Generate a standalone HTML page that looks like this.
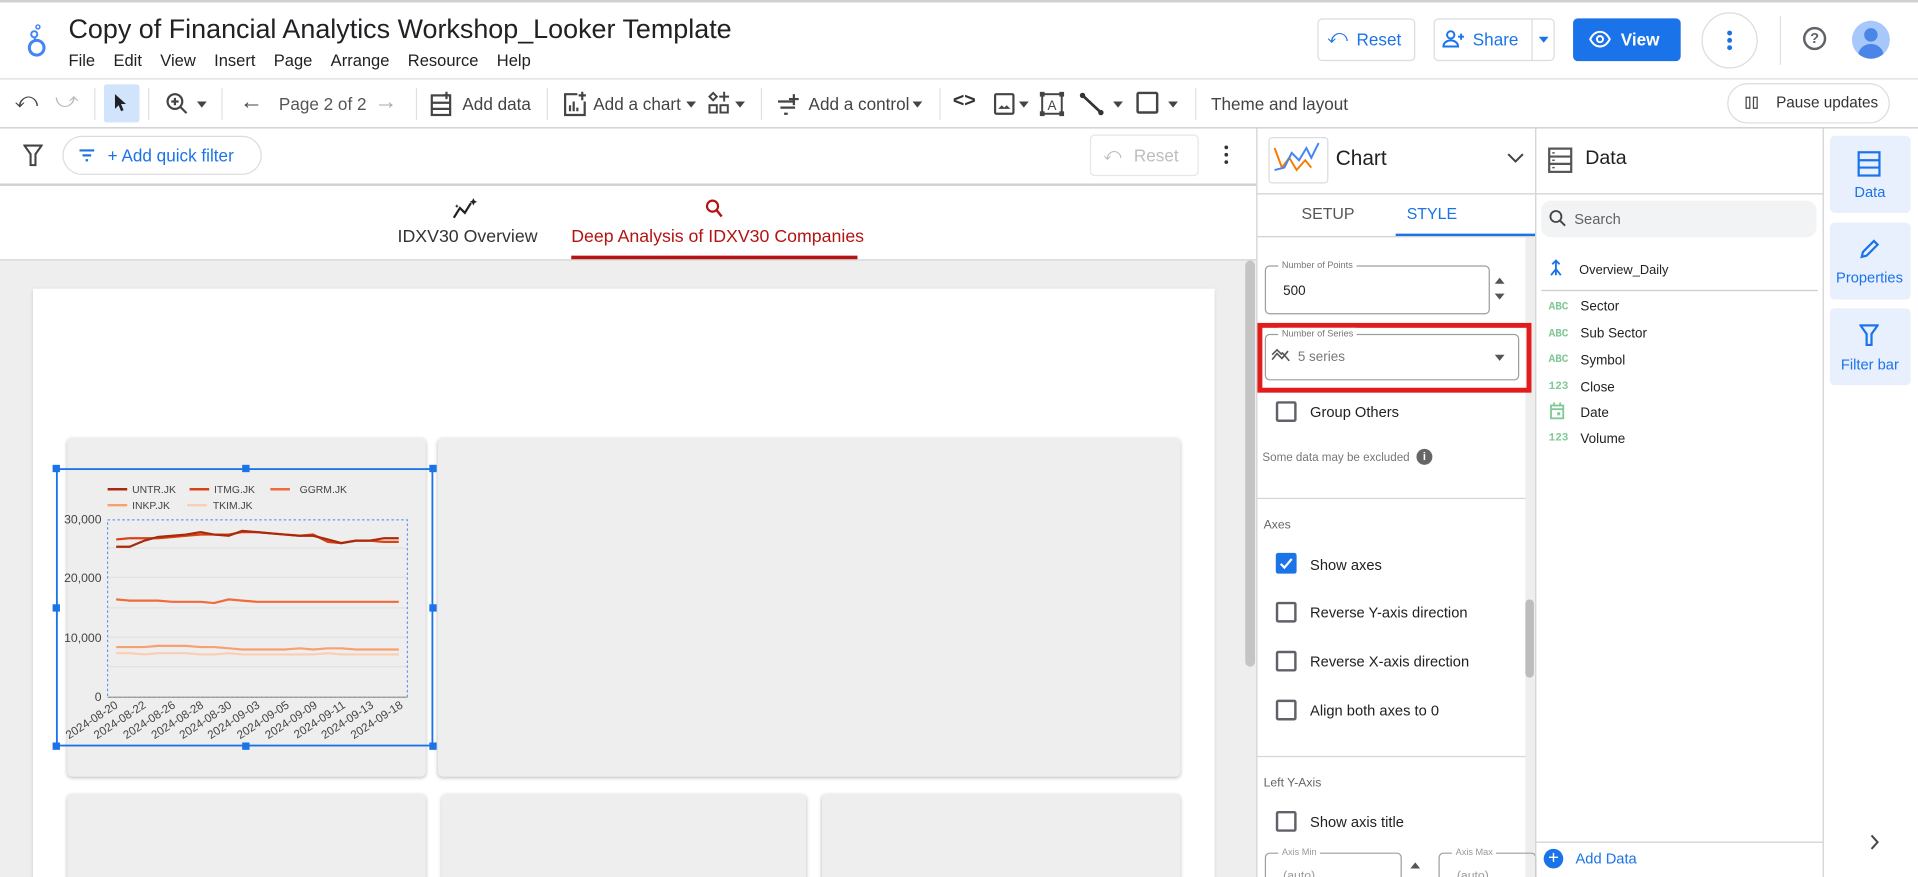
<!DOCTYPE html>
<html><head><meta charset="utf-8"><style>
*{box-sizing:border-box;margin:0;padding:0}
html,body{width:1918px;height:877px;overflow:hidden;background:#fff}
body{font-family:"Liberation Sans",Arial,sans-serif;color:#3c4043}
#w{position:absolute;left:0;top:0;width:1568px;height:717px;transform:scale(1.22321);transform-origin:0 0;overflow:hidden;background:#fff}
.a{position:absolute}
.t{position:absolute;white-space:nowrap}
.btn{position:absolute;border:1px solid #dadce0;border-radius:4px;background:#fff}
.cb{position:absolute;width:17px;height:17px;border:2px solid #5f6368;border-radius:2px}
.lbl{position:absolute;font-size:12px;color:#202124;white-space:nowrap}
.fl{position:absolute;font-size:11px;color:#202124;white-space:nowrap}
.ic{position:absolute;font-size:9px;color:#81c995;font-family:"Liberation Mono",monospace;font-weight:bold}
.card{position:absolute;background:#eeeeee;border-radius:4px;box-shadow:0 1px 3px rgba(0,0,0,.25)}
</style></head><body><div id="w">
<div class="a" style="left:0;top:0;width:1568px;height:2px;background:#d0d0d0"></div>
<svg class="a" style="left:20px;top:18px" width="22" height="30" viewBox="0 0 22 30"><circle cx="10" cy="21" r="6" fill="none" stroke="#4285f4" stroke-width="2.5"/><circle cx="8" cy="10" r="2.5" fill="none" stroke="#4285f4" stroke-width="1.6"/><circle cx="11" cy="4" r="1.6" fill="none" stroke="#4285f4" stroke-width="1.2"/><line x1="8" y1="12" x2="9" y2="15" stroke="#4285f4" stroke-width="1.6"/></svg>
<div class="t" style="left:56px;top:11px;font-size:22px;color:#202124">Copy of Financial Analytics Workshop_Looker Template</div>
<div class="t" style="left:56px;top:42px;font-size:13.5px;color:#202124">File&nbsp;&nbsp;&nbsp;&nbsp;Edit&nbsp;&nbsp;&nbsp;&nbsp;View&nbsp;&nbsp;&nbsp;&nbsp;Insert&nbsp;&nbsp;&nbsp;&nbsp;Page&nbsp;&nbsp;&nbsp;&nbsp;Arrange&nbsp;&nbsp;&nbsp;&nbsp;Resource&nbsp;&nbsp;&nbsp;&nbsp;Help</div>
<div class="btn" style="left:1077px;top:15px;width:80px;height:35px"></div>
<div class="t" style="left:1085px;top:22px;font-size:16px;color:#1a73e8">⤺</div>
<div class="t" style="left:1109px;top:24px;font-size:14px;color:#1a73e8">Reset</div>
<div class="btn" style="left:1172px;top:15px;width:99px;height:35px"></div>
<div class="a" style="left:1252px;top:15px;width:1px;height:35px;background:#dadce0"></div>
<svg class="a" style="left:1179px;top:24px" width="18" height="16" viewBox="0 0 18 16"><circle cx="7" cy="4.5" r="3" fill="none" stroke="#1a73e8" stroke-width="1.6"/><path d="M1 14c0-3 3-5 6-5s6 2 6 5z" fill="none" stroke="#1a73e8" stroke-width="1.6"/><path d="M13 6h5M15.5 3.5v5" stroke="#1a73e8" stroke-width="1.6"/></svg>
<div class="t" style="left:1204px;top:24px;font-size:14px;color:#1a73e8">Share</div>
<div class="a" style="left:1258px;top:30px;border:4px solid transparent;border-top:5px solid #1a73e8"></div>
<div class="a" style="left:1286px;top:15px;width:88px;height:35px;background:#1a73e8;border-radius:4px"></div>
<svg class="a" style="left:1299px;top:25px" width="18" height="14" viewBox="0 0 18 14"><path d="M1 7c2-4 5-6 8-6s6 2 8 6c-2 4-5 6-8 6s-6-2-8-6z" fill="none" stroke="#fff" stroke-width="1.6"/><circle cx="9" cy="7" r="2.5" fill="none" stroke="#fff" stroke-width="1.6"/></svg>
<div class="t" style="left:1325px;top:24px;font-size:14px;color:#fff;font-weight:bold">View</div>
<div class="a" style="left:1391px;top:10px;width:46px;height:46px;border:1px solid #dadce0;border-radius:50%"></div>
<div class="a" style="left:1412px;top:25px;width:4px;height:4px;border-radius:50%;background:#1a73e8;box-shadow:0 6px 0 #1a73e8,0 12px 0 #1a73e8"></div>
<div class="a" style="left:1455px;top:13px;width:1px;height:40px;background:#e0e0e0"></div>
<div class="a" style="left:1474px;top:22px;width:19px;height:19px;border:2px solid #5f6368;border-radius:50%;font-size:12px;font-weight:bold;color:#5f6368;text-align:center;line-height:15px">?</div>
<div class="a" style="left:1514px;top:17px;width:31px;height:31px;border-radius:50%;background:#a8c7fa;overflow:hidden"><div class="a" style="left:10px;top:6px;width:11px;height:11px;border-radius:50%;background:#4a86e8"></div><div class="a" style="left:5px;top:19px;width:21px;height:14px;border-radius:10px 10px 0 0;background:#4a86e8"></div></div>
<div class="a" style="left:0;top:64px;width:1568px;height:1px;background:#dadce0"></div>
<div class="t" style="left:12px;top:72px;font-size:18px;color:#444">⤺</div>
<div class="t" style="left:45px;top:72px;font-size:18px;color:#bbb">⤻</div>
<div class="a" style="left:77px;top:72px;width:1px;height:26px;background:#e0e0e0"></div>
<div class="a" style="left:85px;top:69px;width:29px;height:31px;background:#d2e3fc;border-radius:2px"></div>
<svg class="a" style="left:93px;top:76px" width="12" height="16" viewBox="0 0 12 16"><path d="M1 1l9 8h-4l2 5-2 1-2-5-3 3z" fill="#202124"/></svg>
<div class="a" style="left:121px;top:72px;width:1px;height:26px;background:#e0e0e0"></div>
<svg class="a" style="left:135px;top:75px" width="20" height="20" viewBox="0 0 20 20"><circle cx="8" cy="8" r="6" fill="none" stroke="#444" stroke-width="1.8"/><path d="M12.5 12.5l5 5M5 8h6M8 5v6" stroke="#444" stroke-width="1.8"/></svg>
<div class="a" style="left:161px;top:83px;border:4px solid transparent;border-top:5px solid #444"></div>
<div class="a" style="left:181px;top:72px;width:1px;height:26px;background:#e0e0e0"></div>
<div class="t" style="left:196px;top:73px;font-size:19px;color:#444">←</div>
<div class="t" style="left:228px;top:77px;font-size:14px;color:#555">Page 2 of 2</div>
<div class="t" style="left:306px;top:73px;font-size:19px;color:#aaa">→</div>
<div class="a" style="left:340px;top:72px;width:1px;height:26px;background:#e0e0e0"></div>
<svg class="a" style="left:351px;top:74px" width="22" height="22" viewBox="0 0 22 22"><rect x="2" y="4" width="15" height="16" fill="none" stroke="#444" stroke-width="1.8"/><path d="M2 10h15M2 15h15M14 1v6M11 4h6" stroke="#444" stroke-width="1.8"/></svg>
<div class="t" style="left:378px;top:77px;font-size:14px;color:#444">Add data</div>
<div class="a" style="left:447px;top:72px;width:1px;height:26px;background:#e0e0e0"></div>
<svg class="a" style="left:459px;top:74px" width="22" height="22" viewBox="0 0 22 22"><path d="M13 3H3v17h16V9" fill="none" stroke="#444" stroke-width="1.8"/><path d="M7 17v-5M10 17v-8M13 17v-3M17 1v7M14 4h6" stroke="#444" stroke-width="1.8"/></svg>
<div class="t" style="left:485px;top:77px;font-size:14px;color:#444">Add a chart</div>
<div class="a" style="left:561px;top:83px;border:4px solid transparent;border-top:5px solid #444"></div>
<svg class="a" style="left:578px;top:74px" width="20" height="22" viewBox="0 0 20 22"><path d="M5 2l3 3-3 3-3-3z" fill="none" stroke="#444" stroke-width="1.6"/><rect x="2" y="12" width="6" height="6" fill="none" stroke="#444" stroke-width="1.6"/><rect x="11" y="12" width="6" height="6" fill="none" stroke="#444" stroke-width="1.6"/><path d="M14 1v8M10 5h8" stroke="#444" stroke-width="1.6"/></svg>
<div class="a" style="left:601px;top:83px;border:4px solid transparent;border-top:5px solid #444"></div>
<div class="a" style="left:622px;top:72px;width:1px;height:26px;background:#e0e0e0"></div>
<svg class="a" style="left:634px;top:74px" width="22" height="22" viewBox="0 0 22 22"><path d="M2 9h14M4 14h12M7 19h3M15 3v9M11 7h8" stroke="#444" stroke-width="1.8"/></svg>
<div class="t" style="left:661px;top:77px;font-size:14px;color:#444">Add a control</div>
<div class="a" style="left:746px;top:83px;border:4px solid transparent;border-top:5px solid #444"></div>
<div class="a" style="left:768px;top:72px;width:1px;height:26px;background:#e0e0e0"></div>
<div class="t" style="left:779px;top:74px;font-size:16px;color:#333;font-weight:bold">&lt;&gt;</div>
<svg class="a" style="left:812px;top:75px" width="18" height="20" viewBox="0 0 18 20"><rect x="1.5" y="2" width="15" height="16" rx="1" fill="none" stroke="#444" stroke-width="1.8"/><path d="M4 14l3-3 2 2 2-2 3 3z" fill="#444"/></svg>
<div class="a" style="left:833px;top:83px;border:4px solid transparent;border-top:5px solid #444"></div>
<svg class="a" style="left:850px;top:75px" width="20" height="20" viewBox="0 0 20 20"><rect x="2" y="2" width="16" height="16" fill="none" stroke="#444" stroke-width="1.6"/><rect x="0" y="0" width="4" height="4" fill="#444"/><rect x="16" y="0" width="4" height="4" fill="#444"/><rect x="0" y="16" width="4" height="4" fill="#444"/><rect x="16" y="16" width="4" height="4" fill="#444"/><text x="10" y="15" font-size="11" text-anchor="middle" fill="#444" font-family="Liberation Sans">A</text></svg>
<svg class="a" style="left:882px;top:75px" width="22" height="20" viewBox="0 0 22 20"><path d="M3 3l15 14" stroke="#333" stroke-width="2.2"/><circle cx="3" cy="3" r="2.2" fill="#333"/><circle cx="18" cy="17" r="2.2" fill="#333"/></svg>
<div class="a" style="left:910px;top:83px;border:4px solid transparent;border-top:5px solid #444"></div>
<div class="a" style="left:929px;top:75px;width:18px;height:18px;border:2px solid #444;border-radius:2px"></div>
<div class="a" style="left:955px;top:83px;border:4px solid transparent;border-top:5px solid #444"></div>
<div class="a" style="left:977px;top:72px;width:1px;height:26px;background:#e0e0e0"></div>
<div class="t" style="left:990px;top:77px;font-size:14px;color:#444">Theme and layout</div>
<div class="a" style="left:1412px;top:68px;width:133px;height:33px;border:1px solid #dadce0;border-radius:17px"></div>
<div class="a" style="left:1427px;top:79px;width:4px;height:10px;border:1.5px solid #444"></div>
<div class="a" style="left:1433px;top:79px;width:4px;height:10px;border:1.5px solid #444"></div>
<div class="t" style="left:1452px;top:77px;font-size:12.5px;color:#333">Pause updates</div>
<div class="a" style="left:0;top:104px;width:1568px;height:1px;background:#c8c8c8"></div>
<svg class="a" style="left:19px;top:118px" width="16" height="18" viewBox="0 0 16 18"><path d="M1 1h14l-5 7v9h-4V8z" fill="none" stroke="#444" stroke-width="1.7"/></svg>
<div class="a" style="left:51px;top:111px;width:163px;height:32px;border:1px solid #dadce0;border-radius:16px"></div>
<svg class="a" style="left:64px;top:121px" width="14" height="12" viewBox="0 0 14 12"><path d="M1 2h12M3.5 6h7M6 10h2" stroke="#1a73e8" stroke-width="1.8"/></svg>
<div class="t" style="left:88px;top:119px;font-size:14px;color:#1a73e8">+ Add quick filter</div>
<div class="a" style="left:891px;top:110px;width:89px;height:34px;border:1px solid #e6e6e6;border-radius:4px"></div>
<div class="t" style="left:902px;top:118px;font-size:14px;color:#bdbdbd">⤺</div>
<div class="t" style="left:927px;top:119px;font-size:14px;color:#bdbdbd">Reset</div>
<div class="a" style="left:1001px;top:119px;width:3px;height:3px;border-radius:50%;background:#333;box-shadow:0 6px 0 #333,0 12px 0 #333"></div>
<div class="a" style="left:0;top:150px;width:1027px;height:2px;background:#d0d0d0"></div>
<svg class="a" style="left:369px;top:162px" width="22" height="18" viewBox="0 0 22 18"><path d="M2 16l5-8 4 4 5-8" fill="none" stroke="#222" stroke-width="1.8"/><path d="M17 2l1-2 1 2 2 1-2 1-1 2-1-2-2-1zM4 6l.5-1 .5 1 1 .5-1 .5-.5 1-.5-1-1-.5z" fill="#222"/></svg>
<div class="t" style="left:325px;top:186px;font-size:14.5px;color:#333">IDXV30 Overview</div>
<svg class="a" style="left:576px;top:162px" width="16" height="18" viewBox="0 0 16 18"><circle cx="6.5" cy="6.5" r="4.5" fill="none" stroke="#b31412" stroke-width="1.8"/><path d="M10 10l4 5" stroke="#b31412" stroke-width="2"/></svg>
<div class="t" style="left:467px;top:186px;font-size:14.5px;color:#b31412">Deep Analysis of IDXV30 Companies</div>
<div class="a" style="left:467px;top:209px;width:234px;height:3px;background:#b31412"></div>
<div class="a" style="left:0;top:212px;width:1027px;height:1px;background:#d0d0d0"></div>
<div class="a" style="left:0;top:213px;width:1027px;height:504px;background:#eeeeee"></div>
<div class="a" style="left:27px;top:236px;width:966px;height:490px;background:#fff;box-shadow:0 1px 3px rgba(0,0,0,.15)"></div>
<div class="a" style="left:1018px;top:213px;width:8px;height:332px;background:#c4c4c4;border-radius:4px"></div>
<div class="card" style="left:55px;top:358px;width:293px;height:277px"></div>
<div class="card" style="left:358px;top:358px;width:607px;height:277px"></div>
<div class="card" style="left:55px;top:649px;width:293px;height:80px"></div>
<div class="card" style="left:361px;top:649px;width:298px;height:80px"></div>
<div class="card" style="left:672px;top:649px;width:293px;height:80px"></div>
<svg class="a" style="left:0;top:0" width="1027" height="717" viewBox="0 0 1027 717" font-family="Liberation Sans,sans-serif">
<g font-size="8.5" fill="#444">
<line x1="88" y1="400" x2="104" y2="400" stroke="#a82a0c" stroke-width="2"/><text x="108" y="403">UNTR.JK</text>
<line x1="155" y1="400" x2="171" y2="400" stroke="#d84315" stroke-width="2"/><text x="175" y="403">ITMG.JK</text>
<line x1="221" y1="400" x2="237" y2="400" stroke="#f06a3a" stroke-width="2"/><text x="245" y="403">GGRM.JK</text>
<line x1="88" y1="413" x2="104" y2="413" stroke="#f8a070" stroke-width="2"/><text x="108" y="416">INKP.JK</text>
<line x1="153" y1="413" x2="169" y2="413" stroke="#fbcdb2" stroke-width="2"/><text x="174" y="416">TKIM.JK</text>
</g>
<g stroke="#e2e2e2" stroke-width="1"><line x1="88" y1="448" x2="333" y2="448"/><line x1="88" y1="472" x2="333" y2="472"/><line x1="88" y1="497" x2="333" y2="497"/><line x1="88" y1="521" x2="333" y2="521"/><line x1="88" y1="545" x2="333" y2="545"/></g>
<rect x="88" y="425" width="245" height="145" fill="none" stroke="#4285f4" stroke-width="0.8" stroke-dasharray="2,2"/>
<line x1="88" y1="570" x2="333" y2="570" stroke="#999" stroke-width="1"/>
<g font-size="10" fill="#444" text-anchor="end"><text x="83" y="428">30,000</text><text x="83" y="476">20,000</text><text x="83" y="525">10,000</text><text x="83" y="573">0</text></g>
<g fill="none" stroke-width="1.8">
<polyline stroke="#fbcdb2" points="95,534 106,534 118,535 129,534 141,534 152,534 164,535 175,535 187,534 198,535 210,535 221,535 233,535 245,535 256,535 268,534 279,535 291,535 302,535 314,535 326,535"/>
<polyline stroke="#f8a070" points="95,529 106,529 118,529 129,528 141,528 152,528 164,529 175,529 187,530 198,531 210,531 221,531 233,531 245,530 256,531 268,530 279,530 291,531 302,531 314,531 326,531"/>
<polyline stroke="#f06a3a" points="95,490 106,491 118,491 129,491 141,492 152,492 164,492 175,493 187,490 198,491 210,492 221,492 233,492 245,492 256,492 268,492 279,492 291,492 302,492 314,492 326,492"/>
<polyline stroke="#d84315" points="95,441 106,440 118,440 129,440 141,439 152,438 164,437 175,437 187,437 198,435 210,435 221,436 233,437 245,438 256,437 268,443 279,444 291,442 302,442 314,443 326,443"/>
<polyline stroke="#a82a0c" points="95,447 106,447 118,442 129,439 141,438 152,437 164,435 175,437 187,438 198,434 210,435 221,436 233,437 245,438 256,438 268,441 279,444 291,442 302,442 314,440 326,440"/>
</g>
<g font-size="9.5" fill="#444" text-anchor="end">
<text transform="translate(97,578) rotate(-33)">2024-08-20</text>
<text transform="translate(120,578) rotate(-33)">2024-08-22</text>
<text transform="translate(144,578) rotate(-33)">2024-08-26</text>
<text transform="translate(167,578) rotate(-33)">2024-08-28</text>
<text transform="translate(190,578) rotate(-33)">2024-08-30</text>
<text transform="translate(213,578) rotate(-33)">2024-09-03</text>
<text transform="translate(237,578) rotate(-33)">2024-09-05</text>
<text transform="translate(260,578) rotate(-33)">2024-09-09</text>
<text transform="translate(283,578) rotate(-33)">2024-09-11</text>
<text transform="translate(306,578) rotate(-33)">2024-09-13</text>
<text transform="translate(330,578) rotate(-33)">2024-09-18</text>
</g>
<rect x="46.5" y="383.5" width="307" height="226" fill="none" stroke="#1a73e8" stroke-width="1.5"/>
<g fill="#1a73e8"><rect x="43" y="380" width="6" height="6"/><rect x="198" y="380" width="6" height="6"/><rect x="351" y="380" width="6" height="6"/><rect x="43" y="494" width="6" height="6"/><rect x="351" y="494" width="6" height="6"/><rect x="43" y="607" width="6" height="6"/><rect x="198" y="607" width="6" height="6"/><rect x="351" y="607" width="6" height="6"/></g>
</svg>
<div class="a" style="left:1027px;top:105px;width:1px;height:612px;background:#d0d0d0"></div>
<div class="a" style="left:1037px;top:112px;width:49px;height:38px;border:1px solid #dadce0;border-radius:3px;background:#fff"></div>
<svg class="a" style="left:1040px;top:115px" width="44" height="32" viewBox="0 0 44 32"><polyline points="2,6 8,22 14,14 20,24 27,16 32,22" fill="none" stroke="#f57c00" stroke-width="1.6"/><polyline points="2,24 10,22 16,10 22,16 28,6 32,14 38,2" fill="none" stroke="#4285f4" stroke-width="1.6"/></svg>
<div class="t" style="left:1092px;top:120px;font-size:17px;color:#202124">Chart</div>
<svg class="a" style="left:1232px;top:125px" width="14" height="9" viewBox="0 0 14 9"><path d="M1 1l6 6 6-6" fill="none" stroke="#444" stroke-width="1.6"/></svg>
<div class="a" style="left:1028px;top:158px;width:227px;height:1px;background:#d0d0d0"></div>
<div class="t" style="left:1064px;top:167px;font-size:13px;color:#555">SETUP</div>
<div class="t" style="left:1150px;top:167px;font-size:13px;color:#1a73e8">STYLE</div>
<div class="a" style="left:1141px;top:191px;width:114px;height:2px;background:#1a73e8"></div>
<div class="a" style="left:1028px;top:193px;width:227px;height:1px;background:#d0d0d0"></div>
<div class="a" style="left:1247px;top:194px;width:8px;height:523px;background:#eee"></div>
<div class="a" style="left:1247px;top:490px;width:7px;height:64px;background:#bdbdbd;border-radius:4px"></div>
<div class="a" style="left:1034px;top:217px;width:184px;height:40px;border:1px solid #9e9e9e;border-radius:4px"></div>
<div class="t" style="left:1045px;top:212px;font-size:7.5px;color:#777;background:#fff;padding:0 3px">Number of Points</div>
<div class="t" style="left:1049px;top:232px;font-size:11px;color:#202124">500</div>
<div class="a" style="left:1222px;top:227px;border:4px solid transparent;border-bottom:5px solid #555;border-top:0"></div>
<div class="a" style="left:1222px;top:240px;border:4px solid transparent;border-top:5px solid #555"></div>
<div class="a" style="left:1028px;top:264px;width:224px;height:57px;border:4px solid #e21b1b"></div>
<div class="a" style="left:1034px;top:273px;width:208px;height:38px;border:1px solid #9e9e9e;border-radius:4px"></div>
<div class="t" style="left:1045px;top:268px;font-size:7.5px;color:#777;background:#fff;padding:0 3px">Number of Series</div>
<svg class="a" style="left:1039px;top:285px" width="16" height="11" viewBox="0 0 16 11"><path d="M1 9l4-5 4 4 5-6M1 5l4-4 4 4M9 3l6 7" fill="none" stroke="#555" stroke-width="1.3"/></svg>
<div class="t" style="left:1061px;top:286px;font-size:11px;color:#777">5 series</div>
<div class="a" style="left:1222px;top:290px;border:4px solid transparent;border-top:5px solid #555"></div>
<div class="cb" style="left:1043px;top:328px"></div>
<div class="lbl" style="left:1071px;top:330px">Group Others</div>
<div class="t" style="left:1032px;top:369px;font-size:9.5px;color:#777">Some data may be excluded</div>
<div class="a" style="left:1158px;top:367px;width:13px;height:13px;border-radius:50%;background:#666;color:#fff;font-size:9px;font-weight:bold;text-align:center;line-height:13px">i</div>
<div class="a" style="left:1028px;top:407px;width:219px;height:1px;background:#d6d6d6"></div>
<div class="t" style="left:1033px;top:424px;font-size:10px;color:#666">Axes</div>
<div class="a" style="left:1043px;top:452px;width:17px;height:17px;background:#1a73e8;border-radius:2px"></div>
<svg class="a" style="left:1045px;top:454px" width="13" height="13" viewBox="0 0 13 13"><path d="M2 7l3 3 6-7" fill="none" stroke="#fff" stroke-width="1.8"/></svg>
<div class="lbl" style="left:1071px;top:455px">Show axes</div>
<div class="cb" style="left:1043px;top:492px"></div>
<div class="lbl" style="left:1071px;top:494px">Reverse Y-axis direction</div>
<div class="cb" style="left:1043px;top:532px"></div>
<div class="lbl" style="left:1071px;top:534px">Reverse X-axis direction</div>
<div class="cb" style="left:1043px;top:572px"></div>
<div class="lbl" style="left:1071px;top:574px">Align both axes to 0</div>
<div class="a" style="left:1028px;top:618px;width:219px;height:1px;background:#d6d6d6"></div>
<div class="t" style="left:1033px;top:635px;font-size:10px;color:#666">Left Y-Axis</div>
<div class="cb" style="left:1043px;top:663px"></div>
<div class="lbl" style="left:1071px;top:665px">Show axis title</div>
<div class="a" style="left:1034px;top:697px;width:112px;height:30px;border:1px solid #9e9e9e;border-radius:4px"></div>
<div class="t" style="left:1045px;top:692px;font-size:7.5px;color:#999;background:#fff;padding:0 3px">Axis Min</div>
<div class="t" style="left:1049px;top:711px;font-size:10px;color:#999">(auto)</div>
<div class="a" style="left:1153px;top:705px;border:4px solid transparent;border-bottom:5px solid #555;border-top:0"></div>
<div class="a" style="left:1176px;top:697px;width:80px;height:30px;border:1px solid #9e9e9e;border-radius:4px"></div>
<div class="t" style="left:1187px;top:692px;font-size:7.5px;color:#999;background:#fff;padding:0 3px">Axis Max</div>
<div class="t" style="left:1191px;top:711px;font-size:10px;color:#999">(auto)</div>
<div class="a" style="left:1255px;top:105px;width:1px;height:612px;background:#d0d0d0"></div>
<svg class="a" style="left:1265px;top:120px" width="22" height="22" viewBox="0 0 22 22"><rect x="1.5" y="1.5" width="18" height="19" fill="none" stroke="#555" stroke-width="1.8"/><path d="M1.5 8h18M1.5 14h18" stroke="#555" stroke-width="1.8"/><path d="M4 5h2M4 11h2M4 17h2" stroke="#555" stroke-width="1.2"/></svg>
<div class="t" style="left:1296px;top:121px;font-size:16px;color:#202124">Data</div>
<div class="a" style="left:1256px;top:158px;width:234px;height:1px;background:#d0d0d0"></div>
<div class="a" style="left:1260px;top:164px;width:225px;height:30px;background:#f1f3f4;border-radius:8px"></div>
<svg class="a" style="left:1266px;top:171px" width="15" height="15" viewBox="0 0 15 15"><circle cx="6" cy="6" r="4.5" fill="none" stroke="#444" stroke-width="1.5"/><path d="M9.5 9.5l4 4" stroke="#444" stroke-width="1.6"/></svg>
<div class="t" style="left:1287px;top:172px;font-size:12px;color:#5f6368">Search</div>
<svg class="a" style="left:1266px;top:211px" width="12" height="16" viewBox="0 0 12 16"><path d="M6 14V3M3 5l3-3 3 3M6 9l-4 5M6 9l4 5" fill="none" stroke="#1a73e8" stroke-width="1.5"/></svg>
<div class="t" style="left:1291px;top:215px;font-size:10.5px;color:#202124">Overview_Daily</div>
<div class="a" style="left:1260px;top:237px;width:226px;height:1px;background:#ccc"></div>
<div class="ic" style="left:1266px;top:246px">ABC</div><div class="fl" style="left:1292px;top:245px">Sector</div>
<div class="ic" style="left:1266px;top:268px">ABC</div><div class="fl" style="left:1292px;top:267px">Sub Sector</div>
<div class="ic" style="left:1266px;top:289px">ABC</div><div class="fl" style="left:1292px;top:289px">Symbol</div>
<div class="ic" style="left:1266px;top:311px">123</div><div class="fl" style="left:1292px;top:311px">Close</div>
<svg class="a" style="left:1267px;top:329px" width="12" height="14" viewBox="0 0 12 14"><rect x="1" y="2.5" width="10" height="10.5" fill="none" stroke="#81c995" stroke-width="1.5"/><path d="M1 5.5h10M3.5 0v3M8.5 0v3" stroke="#81c995" stroke-width="1.5"/><rect x="6" y="8" width="2.5" height="2.5" fill="#81c995"/></svg>
<div class="fl" style="left:1292px;top:332px">Date</div>
<div class="ic" style="left:1266px;top:353px">123</div><div class="fl" style="left:1292px;top:353px">Volume</div>
<div class="a" style="left:1256px;top:688px;width:234px;height:1px;background:#d0d0d0"></div>
<div class="a" style="left:1262px;top:694px;width:16px;height:16px;border-radius:50%;background:#1a73e8;color:#fff;font-size:15px;text-align:center;line-height:16px">+</div>
<div class="t" style="left:1288px;top:695px;font-size:12px;color:#1a73e8">Add Data</div>
<div class="a" style="left:1490px;top:105px;width:1px;height:612px;background:#d0d0d0"></div>
<div class="a" style="left:1496px;top:111px;width:66px;height:63px;background:#e8f0fe;border-radius:4px"></div>
<svg class="a" style="left:1518px;top:123px" width="20" height="22" viewBox="0 0 20 22"><rect x="1.5" y="1.5" width="17" height="19" fill="none" stroke="#1a73e8" stroke-width="1.8"/><path d="M1.5 8h17M1.5 14h17" stroke="#1a73e8" stroke-width="1.8"/></svg>
<div class="t" style="left:1516px;top:150px;font-size:12px;color:#1a73e8">Data</div>
<div class="a" style="left:1496px;top:182px;width:66px;height:63px;background:#e8f0fe;border-radius:4px"></div>
<svg class="a" style="left:1519px;top:195px" width="18" height="18" viewBox="0 0 18 18"><path d="M3 15l1-4 9-9 3 3-9 9z" fill="none" stroke="#1a73e8" stroke-width="1.8"/></svg>
<div class="t" style="left:1501px;top:220px;font-size:12px;color:#1a73e8">Properties</div>
<div class="a" style="left:1496px;top:252px;width:66px;height:63px;background:#e8f0fe;border-radius:4px"></div>
<svg class="a" style="left:1520px;top:265px" width="16" height="18" viewBox="0 0 16 18"><path d="M1 1h14l-5 7v9h-4V8z" fill="none" stroke="#1a73e8" stroke-width="1.8"/></svg>
<div class="t" style="left:1505px;top:291px;font-size:12px;color:#1a73e8">Filter bar</div>
<svg class="a" style="left:1529px;top:682px" width="8" height="13" viewBox="0 0 8 13"><path d="M1 1l5 5.5L1 12" fill="none" stroke="#444" stroke-width="1.6"/></svg>
</div></body></html>
